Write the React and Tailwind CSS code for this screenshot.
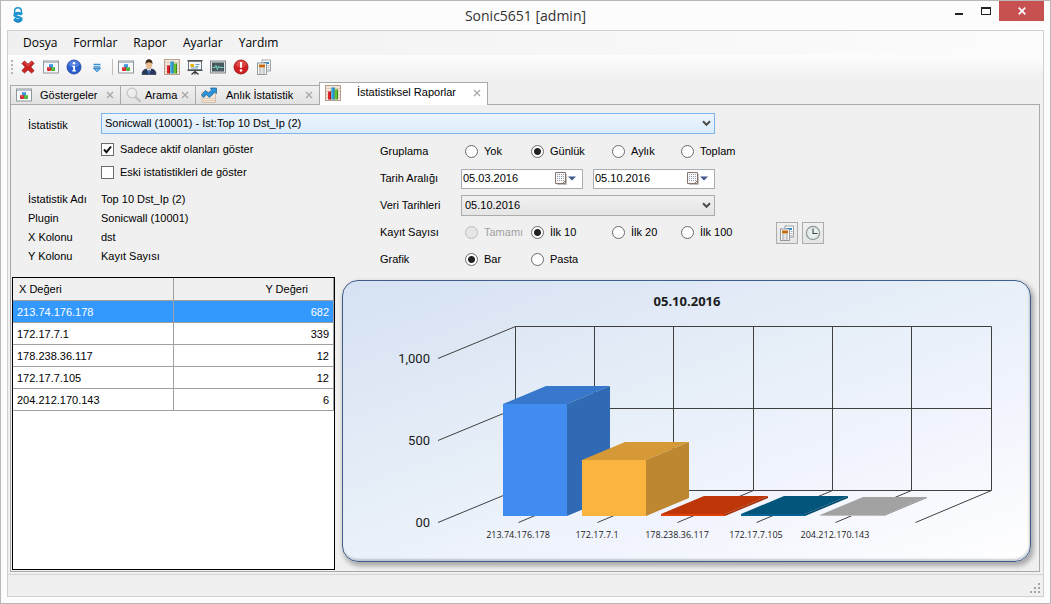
import React, { useState } from "react";

function Icon({ size = 16, children }) {
  return (
    <svg width={size} height={size} viewBox="0 0 16 16" aria-hidden="true" className="shrink-0">
      {children}
    </svg>
  );
}

const AppLogo = () => (
  <Icon>
    <path d="M4.6 6V4.2a3.4 3.4 0 0 1 6.8 0V6" fill="none" stroke="#1b94d2" strokeWidth="1.4" />
    <path
      d="M12 7.600C10.500 5.900 5 5.600 4.700 8c-.3 2.300 6.800 1.700 6.500 4-.2 1.900-4.800 1.700-7.200 0"
      fill="none"
      stroke="#1b94d2"
      strokeWidth="2.8"
    />
    <path d="M3.500 12.600c2.500 2.200 6.500 2.200 9 0-.8 2-2.500 3.200-4.500 3.200s-3.900-1.200-4.500-3.200z" fill="#1279b5" />
  </Icon>
);

const CrossIcon = () => (
  <Icon>
    <path
      d="M4.500 2 8 5.300 11.700 2 14 4.400 10.700 8 14 11.700 11.600 14 8 10.700 4.500 14 2 11.600 5.300 8 2 4.500z"
      fill="#cf2222"
      stroke="#8e1010"
      strokeWidth=".8"
    />
    <path d="M4.500 3.200 8 6.600l3.600-3.400" fill="none" stroke="#ee6a62" strokeWidth=".9" />
  </Icon>
);

const BlocksIcon = () => (
  <Icon>
    <rect x=".5" y="2" width="15" height="12" fill="#f7f8f9" stroke="#8f979d" />
    <path d="M1 3h14" stroke="#b9c0c6" strokeWidth="2" />
    <rect x="6" y="5" width="4" height="4" rx="1" fill="#2f8fe0" />
    <rect x="4" y="8" width="4" height="4" rx="1" fill="#d8262c" />
    <rect x="8" y="8" width="4" height="4" rx="1" fill="#45b035" />
    <path d="M7 6h2M5 9h2M9 9h2" stroke="#fff" strokeWidth=".8" opacity=".5" />
  </Icon>
);

const InfoIcon = () => (
  <Icon>
    <circle cx="8" cy="8" r="7" fill="#2b5fd0" stroke="#1b3f9c" strokeWidth=".8" />
    <ellipse cx="8" cy="5" rx="5.500" ry="3.500" fill="#6a95ec" opacity=".6" />
    <circle cx="8" cy="4.300" r="1.300" fill="#fff" />
    <path d="M6.300 6.800h2.700v4.500h1v1.200H6.200v-1.200h1V8h-.9z" fill="#fff" />
  </Icon>
);

const MoreIcon = () => (
  <Icon>
    <path d="M4.500 5.500h7M4.500 8h7" stroke="#3d8fd6" strokeWidth="1.400" />
    <path d="M4.500 9.500h7L8 12.800z" fill="#6db5ee" stroke="#2a78bf" strokeWidth=".8" />
  </Icon>
);

const UserIcon = () => (
  <Icon>
    <path d="M1 15.500c0-3.500 1.500-5 4.500-5.500h5c3 .5 4.500 2 4.500 5.500z" fill="#28395c" stroke="#16213a" strokeWidth=".6" />
    <path d="M5.800 9.700 8 15l2.200-5.300z" fill="#eef1f5" />
    <path d="M7.400 10.700h1.200l.5 3L8 15.300l-1.100-1.600z" fill="#3165b5" />
    <ellipse cx="8" cy="5.500" rx="3" ry="4.200" fill="#e9b98c" />
    <path d="M4.700 5.500C4 1.800 6 .3 8 .3s4 1.500 3.300 5.200C10.900 4 10 3.300 8 3.300S5.100 4 4.700 5.500z" fill="#3c2a1d" />
  </Icon>
);

const ChartIcon = () => (
  <Icon>
    <rect x=".5" y=".5" width="15" height="15" fill="#f1e4d8" stroke="#b9a08c" />
    <path d="M1 3.500h14M1 6.500h14M1 9.500h14M1 12.500h14" stroke="#d9c3b0" strokeWidth=".8" />
    <path d="M3 6.500h3v8H3z" fill="#e0262b" />
    <path d="M5.200 6.500H6v8h-.8z" fill="#8f1216" />
    <path d="M6.300 2.500h3.200v12H6.300z" fill="#31a4dc" />
    <path d="M8.700 2.500h.8v12h-.8z" fill="#16658f" />
    <path d="M9.800 4.500h3.200v10H9.800z" fill="#65c22f" />
    <path d="M12.200 4.500h.8v10h-.8z" fill="#387a14" />
  </Icon>
);

const BoardIcon = () => (
  <Icon>
    <path d="M8 11v2M8 12.500 4.500 15.500M8 12.500l3.500 3M8 12v3.500" stroke="#333" strokeWidth="1.200" />
    <rect x="1.500" y="2" width="13" height="9" fill="#f4f6f8" stroke="#6d767c" />
    <path d="M.5 1.800h15M.5 11.200h15" stroke="#4a5257" strokeWidth="1.400" />
    <rect x="3.500" y="5" width="3.500" height="3" fill="#e6b400" />
    <path d="M8.500 5.500h4M8.500 7.500h3M4 9h7" stroke="#6aa0c8" />
  </Icon>
);

const MonitorIcon = () => (
  <Icon>
    <rect x=".5" y="2" width="15" height="12" fill="#dfe2e4" stroke="#80878b" />
    <rect x="2" y="3.500" width="12" height="9" fill="#46565b" />
    <path d="M5 4v8M8 4v8M11 4v8M2 8h12" stroke="#62767c" strokeWidth=".5" />
    <path d="M2.500 8.500h2.500l1-2 1.300 4L8.500 7l1 1.500h4" fill="none" stroke="#6fe0c8" strokeWidth=".9" />
  </Icon>
);

const AlertIcon = () => (
  <Icon>
    <circle cx="8" cy="8" r="7" fill="#d21f22" stroke="#8e1113" strokeWidth=".8" />
    <ellipse cx="8" cy="5" rx="5.500" ry="3.500" fill="#ea6c64" opacity=".5" />
    <path d="M6.800 3h2.400l-.4 6H7.200z" fill="#fff" />
    <circle cx="8" cy="11.500" r="1.300" fill="#fff" />
  </Icon>
);

const NewsIcon = () => (
  <Icon>
    <rect x="6" y="1" width="8.500" height="11" fill="#fbfbfb" stroke="#8b9196" strokeWidth=".8" />
    <path d="M7.500 3h5.500v2H7.500z" fill="#2b8ed0" />
    <path d="M11.500 6.500h2M11.500 8.500h2M11.500 10.500h2" stroke="#9aa0a5" strokeWidth=".8" />
    <rect x="1.500" y="4" width="9" height="11.500" fill="#fbfbfb" stroke="#7c8287" strokeWidth=".8" />
    <path d="M3 5.500h6v3H3z" fill="#c46a10" />
    <path d="M3 10h2.500M6.500 10H9M3 12h2.500M6.500 12H9M3 14h2.500M6.500 14H9" stroke="#8b9196" strokeWidth=".9" />
  </Icon>
);

const SearchIcon = () => (
  <Icon>
    <path d="m9.500 10 4.500 4.200" stroke="#c3c3c3" strokeWidth="2.400" strokeLinecap="round" />
    <circle cx="6" cy="6" r="4.800" fill="#ececec" stroke="#c6c6c6" strokeWidth="1.300" />
    <path d="M3.500 5.500c.5-1.500 1.500-2 2.800-2.200" stroke="#fff" fill="none" />
  </Icon>
);

const TrendIcon = () => (
  <Icon>
    <rect x="1" y="5" width="13.500" height="10.500" fill="#f4e7da" stroke="#cdb49d" strokeWidth=".8" />
    <path d="M1.500 11.500h12.500M1.500 13.500h12.500" stroke="#e0cab6" />
    <path
      d="M.5 8 4.500 3.500l3 2.500 3-3L9.500 1H15.500v5.500L14 5.200 8.500 10.500 5.500 7.800 2.500 10.500z"
      fill="#2f93d8"
      stroke="#1a5f98"
      strokeWidth=".7"
    />
  </Icon>
);

const ClockIcon = () => (
  <Icon>
    <circle cx="8" cy="8" r="6.600" fill="#e9f1f0" stroke="#8c9698" strokeWidth="1.200" />
    <circle cx="8" cy="8" r="4.800" fill="none" stroke="#c2cecd" strokeDasharray="1 2.770" />
    <path d="M8 3.500v5h4.500" fill="none" stroke="#3d4547" strokeWidth="1.100" />
  </Icon>
);

const CalendarIcon = () => (
  <svg width="12" height="13" viewBox="0 0 12 13" aria-hidden="true">
    <path d="M.5.500h10v11H.5z" fill="#fbf9f8" stroke="#85756f" />
    <path d="M2 2.500h7M2 4.500h7M2 6.500h7M2 8.500h7" stroke="#8f9bb5" strokeDasharray="1 1" />
    <path d="M11.500 2v10.500H2" fill="none" stroke="#c7bfbc" />
    <path d="M7.500 11.500 10.500 8.500" stroke="#85756f" />
  </svg>
);

const menus = ["Dosya", "Formlar", "Rapor", "Ayarlar", "Yardım"];

const tools = [
  { label: "Kapat", icon: CrossIcon },
  { label: "Göstergeler", icon: BlocksIcon },
  { label: "Bilgi", icon: InfoIcon },
  { label: "Diğer", icon: MoreIcon },
  { label: "Panel", icon: BlocksIcon, separated: true },
  { label: "Kullanıcı", icon: UserIcon },
  { label: "Raporlar", icon: ChartIcon },
  { label: "Sunum", icon: BoardIcon },
  { label: "İzleme", icon: MonitorIcon },
  { label: "Uyarılar", icon: AlertIcon },
  { label: "Haberler", icon: NewsIcon },
];

const rows = [
  { x: "213.74.176.178", y: 682 },
  { x: "172.17.7.1", y: 339 },
  { x: "178.238.36.117", y: 12 },
  { x: "172.17.7.105", y: 12 },
  { x: "204.212.170.143", y: 6 },
];

const details = [
  ["İstatistik Adı", "Top 10 Dst_Ip (2)"],
  ["Plugin", "Sonicwall (10001)"],
  ["X Kolonu", "dst"],
  ["Y Kolonu", "Kayıt Sayısı"],
];

function TitleBar() {
  return (
    <header className="grid h-[29px] grid-cols-[1fr_auto_1fr] items-start">
      <div className="pt-[6px] pl-[9px]">
        <AppLogo />
      </div>
      <h1 className="pt-[5px] font-['Open_Sans',sans-serif] text-[14px] leading-5 text-[#333]">
        Sonic5651 [admin]
      </h1>
      <div className="mr-[6px] flex h-5 justify-end">
        <button aria-label="Küçült" className="flex w-[27px] justify-center pt-[12px]">
          <span className="h-[2px] w-2 bg-[#222]" />
        </button>
        <button aria-label="Büyüt" className="flex w-[27px] justify-center pt-[6px]">
          <span className="h-2 w-[10px] border border-t-2 border-[#222]" />
        </button>
        <button aria-label="Kapat" className="flex w-[45px] items-center justify-center bg-[#c75050]">
          <svg width="8" height="8" viewBox="0 0 8 8" aria-hidden="true">
            <path d="m.7.700 6.600 6.600M7.300.700.700 7.300" stroke="#fff" strokeWidth="1.700" />
          </svg>
        </button>
      </div>
    </header>
  );
}

function Tab({ label, icon: TabIcon, active, width, gap }) {
  return (
    <div
      className={`flex items-center border border-b-0 border-[#a9a9a9] pr-[2px] pl-[5px] ${width} ${
        active ? "h-[23px] bg-white pb-[3px]" : "-ml-px h-[19px] bg-gradient-to-b from-[#f0f0f0] to-[#e2e2e2] first:ml-0"
      }`}
    >
      <button role="tab" aria-selected={!!active} className={`flex flex-1 items-center whitespace-nowrap ${gap}`}>
        <TabIcon />
        <span className="text-[11px]">{label}</span>
      </button>
      <button aria-label={`${label} kapat`} className="w-4 text-[#a5a5a5]">
        <svg width="8" height="8" viewBox="0 0 8 8" className="mx-auto" aria-hidden="true">
          <path d="m1 1 6 6M7 1 1 7" stroke="currentColor" strokeWidth="1.200" />
        </svg>
      </button>
    </div>
  );
}

function Select({ id, value, className }) {
  return (
    <div className={`grid h-[21px] items-center border ${className}`}>
      <select id={id} defaultValue={value} className="col-start-1 row-start-1 h-[19px] w-full appearance-none pl-[3px] outline-none">
        <option>{value}</option>
      </select>
      <svg
        width="9"
        height="7"
        viewBox="0 0 9 7"
        className="pointer-events-none col-start-1 row-start-1 mr-[3px] justify-self-end"
        aria-hidden="true"
      >
        <path d="m1 1.200 3.500 3.600L8 1.200" fill="none" stroke="#4d4d4d" strokeWidth="2" />
      </svg>
    </div>
  );
}

function DateField({ label, value }) {
  return (
    <div className="flex h-5 w-[122px] items-center border border-[#abadb3] bg-white pr-[6px]">
      <input aria-label={label} defaultValue={value} className="w-0 flex-1 pl-px outline-none" />
      <button type="button" aria-label={`${label} seç`} className="flex items-center gap-px">
        <CalendarIcon />
        <svg width="8" height="5" viewBox="0 0 8 5" aria-hidden="true">
          <path d="M0 .500h8L4 4.500z" fill="#43598c" />
        </svg>
      </button>
    </div>
  );
}

function Radio({ name, label, checked, disabled }) {
  return (
    <label className={`flex items-center gap-[6px] whitespace-nowrap ${disabled ? "text-[#a0a0a0]" : ""}`}>
      <input
        type="radio"
        name={name}
        defaultChecked={checked}
        disabled={disabled}
        className="size-[13px] appearance-none rounded-full border border-[#6b6b6b] bg-white checked:bg-[radial-gradient(circle,#222_3px,#fff_4px)] disabled:border-[#bcbcbc] disabled:bg-[#e6e6e6]"
      />
      {label}
    </label>
  );
}

function Check({ label, checked }) {
  return (
    <label className="flex h-[23px] items-center gap-[6px]">
      <span className="grid">
        <input
          type="checkbox"
          defaultChecked={checked}
          className="peer col-start-1 row-start-1 size-[13px] appearance-none border border-[#6b6b6b] bg-white"
        />
        <svg
          width="13"
          height="13"
          viewBox="0 0 13 13"
          className="pointer-events-none invisible col-start-1 row-start-1 peer-checked:visible"
          aria-hidden="true"
        >
          <path d="m3 6.500 2.500 2.700L10 3.500" fill="none" stroke="#111" strokeWidth="2" />
        </svg>
      </span>
      {label}
    </label>
  );
}

function RadioRow({ name, options }) {
  return (
    <div className="grid grid-cols-[66px_81px_69px_auto] items-center pl-1">
      {options.map((option) => (
        <Radio key={option.label} name={name} {...option} />
      ))}
    </div>
  );
}

function Field({ label, htmlFor, children }) {
  return (
    <div className="flex h-[27px] items-center">
      <label htmlFor={htmlFor} className="w-[81px] shrink-0">
        {label}
      </label>
      {children}
    </div>
  );
}

function FilterForm() {
  return (
    <form className="pt-2 pl-[17px]">
      <div className="flex items-center">
        <label htmlFor="statistic" className="w-[73px] shrink-0 pt-1">
          İstatistik
        </label>
        <Select
          id="statistic"
          value="Sonicwall (10001) - İst:Top 10 Dst_Ip (2)"
          className="w-full max-w-[614px] border-[#7eb4ea] bg-gradient-to-b from-[#ecf4fc] to-[#dcecfc]"
        />
      </div>

      <div className="flex pt-1">
        <div className="w-[352px] shrink-0">
          <div className="pl-[73px]">
            <Check label="Sadece aktif olanları göster" checked />
            <Check label="Eski istatistikleri de göster" />
          </div>
          <dl className="grid grid-cols-[73px_1fr] pt-[6px] leading-[19px]">
            {details.map(([term, value]) => (
              <React.Fragment key={term}>
                <dt>{term}</dt>
                <dd>{value}</dd>
              </React.Fragment>
            ))}
          </dl>
        </div>

        <div>
          <Field label="Gruplama">
            <RadioRow
              name="grouping"
              options={[{ label: "Yok" }, { label: "Günlük", checked: true }, { label: "Aylık" }, { label: "Toplam" }]}
            />
          </Field>
          <Field label="Tarih Aralığı">
            <div className="flex gap-[10px]">
              <DateField label="Başlangıç tarihi" value="05.03.2016" />
              <DateField label="Bitiş tarihi" value="05.10.2016" />
            </div>
          </Field>
          <Field label="Veri Tarihleri" htmlFor="dates">
            <Select
              id="dates"
              value="05.10.2016"
              className="w-[254px] border-[#acacac] bg-gradient-to-b from-[#f0f0f0] to-[#e5e5e5]"
            />
          </Field>
          <Field label="Kayıt Sayısı">
            <div className="w-[315px]">
              <RadioRow
                name="limit"
                options={[
                  { label: "Tamamı", disabled: true },
                  { label: "İlk 10", checked: true },
                  { label: "İlk 20" },
                  { label: "İlk 100" },
                ]}
              />
            </div>
            <div className="flex gap-1">
              <button
                type="button"
                aria-label="Rapor oluştur"
                className="flex size-[22px] items-center justify-center border border-[#acacac] bg-gradient-to-b from-[#f0f0f0] to-[#e5e5e5]"
              >
                <NewsIcon />
              </button>
              <button
                type="button"
                aria-label="Zamanla"
                className="flex size-[22px] items-center justify-center border border-[#acacac] bg-gradient-to-b from-[#f0f0f0] to-[#e5e5e5]"
              >
                <ClockIcon />
              </button>
            </div>
          </Field>
          <Field label="Grafik">
            <RadioRow name="chart" options={[{ label: "Bar", checked: true }, { label: "Pasta" }]} />
          </Field>
        </div>
      </div>
    </form>
  );
}

function DataGrid() {
  const [selected, setSelected] = useState(0);

  return (
    <div className="w-[323px] shrink-0 border border-black bg-white">
      <table className="w-full table-fixed border-separate border-spacing-0">
        <thead>
          <tr className="h-[23px] bg-[#f0f0f0]">
            <th className="border-r border-b border-[#a0a0a0] pl-[6px] text-left font-normal">X Değeri</th>
            <th className="border-r border-b border-[#a0a0a0] pr-[25px] text-right font-normal">Y Değeri</th>
          </tr>
        </thead>
        <tbody>
          {rows.map((row, i) => (
            <tr
              key={row.x}
              onClick={() => setSelected(i)}
              className={`h-[22px] ${i === selected ? "bg-[#3399ff] text-white" : ""}`}
            >
              <td className="border-r border-b border-[#a0a0a0] pt-px pl-1">{row.x}</td>
              <td className="border-r border-b border-[#a0a0a0] pt-px pr-1 text-right">{row.y}</td>
            </tr>
          ))}
        </tbody>
      </table>
    </div>
  );
}

const gridX = [172.5, 251.5, 330.5, 410.5, 489.5, 568.5, 648.5];
const gridY = [
  { y: 45.5, label: "1,000" },
  { y: 127.5, label: "500" },
  { y: 209.5, label: "00" },
];

const bars = [
  { x: 160, top: 123, front: "#418cf0", roof: "#3777cc", side: "#3069b4", labelX: 175 },
  { x: 239, top: 179, front: "#fcb441", roof: "#d69937", side: "#bd8731", labelX: 254 },
  { x: 318, top: 233, front: "#e0400a", roof: "#be3608", side: "#a83008", labelX: 334 },
  { x: 398, top: 233, front: "#056492", roof: "#04557c", side: "#044b6e", labelX: 413 },
  { x: 477, top: 234, front: "#bfbfbf", roof: "#a2a2a2", side: "#8f8f8f", labelX: 492 },
];

function BarChart() {
  const base = 235;
  const width = 64;
  const dx = 43;
  const dy = 18;

  return (
    <div className="min-w-0 flex-1 rounded-[16px] border border-[#3f5e8c] bg-[linear-gradient(160deg,#d6e1f2_0%,#e7eff8_45%,#f1f4fd_68%,#ffffff_100%)] shadow-[2px_3px_5px_1px_rgba(0,0,0,0.3),inset_-1px_-2px_2px_rgba(80,90,110,0.3)]">
      <svg viewBox="0 0 687 280" className="block h-full w-full" role="img" aria-label="05.10.2016">
        <text x="344" y="25" textAnchor="middle" fill="#1a1a1a" className="font-['Open_Sans',sans-serif] text-[13px] font-bold">
          05.10.2016
        </text>

        <g stroke="#404040" fill="none">
          {gridX.map((x) => (
            <path key={x} d={`M${x} 45.500V209.500`} />
          ))}
          {gridX.slice(1).map((x) => (
            <path key={x} d={`M${x} 209.500l-76 32`} />
          ))}
          {gridY.map(({ y }) => (
            <path key={y} d={`M95 ${y + 32}l77.500 -32H648.500`} />
          ))}
        </g>

        {gridY.map(({ y, label }) => (
          <text
            key={label}
            x="87"
            y={y + 36}
            textAnchor="end"
            fill="#1a1a1a"
            className="font-[Roboto,sans-serif] text-[13px]"
          >
            {label}
          </text>
        ))}

        {bars.map((bar, i) => (
          <g key={bar.x}>
            <path d={`M${bar.x} ${bar.top}l${dx} ${-dy}h${width}l${-dx} ${dy}z`} fill={bar.roof} />
            <path
              d={`M${bar.x + width} ${bar.top}l${dx} ${-dy}V${base - dy}L${bar.x + width} ${base}z`}
              fill={bar.side}
            />
            <path d={`M${bar.x} ${bar.top}h${width}V${base}h${-width}z`} fill={bar.front} />
            <text
              x={bar.labelX}
              y="257"
              textAnchor="middle"
              fill="#1a1a1a"
              className="font-['Open_Sans',sans-serif] text-[9px]"
            >
              {rows[i].x}
            </text>
          </g>
        ))}
      </svg>
    </div>
  );
}

function StatusBar() {
  return (
    <footer className="mt-[2px] flex h-[22px] items-end justify-end border-t border-[#d4d4d4] p-[3px]">
      <svg width="10" height="10" viewBox="0 0 10 10" fill="#a5a5a5" aria-hidden="true">
        <path d="M8 0h2v2H8zM4 4h2v2H4zM8 4h2v2H8zM0 8h2v2H0zM4 8h2v2H4zM8 8h2v2H8z" />
      </svg>
    </footer>
  );
}

export default function App() {
  return (
    <div className="flex min-h-screen flex-col border border-[#b9b9b9] bg-[#fcfcfc] font-['Liberation_Sans',Arial,sans-serif] text-[11px] text-black">
      <TitleBar />
      <div className="mx-[6px] mb-[6px] flex flex-1 flex-col border border-[#d0d0d0] bg-[#f0f0f0]">
        <nav className="flex h-6 items-center gap-4 bg-gradient-to-r from-[#f0f0f0] to-[#fcfcfc] pl-[15px] font-['Open_Sans',sans-serif] text-[12px]">
          {menus.map((menu) => (
            <button key={menu}>{menu}</button>
          ))}
        </nav>

        <div className="flex h-[25px] items-center gap-[7px] bg-gradient-to-b from-[#fdfdfd] to-[#f0f0f0] pb-px pl-[3px]">
          <span className="h-[14px] border-l-2 border-dotted border-[#b5b5b5]" />
          {tools.map(({ label, icon: ToolIcon, separated }) => (
            <button key={label} aria-label={label} className={separated ? "border-l border-[#bdbdbd] pl-[5px]" : ""}>
              <ToolIcon />
            </button>
          ))}
        </div>

        <div role="tablist" className="mt-[2px] ml-[2px] flex h-[22px] items-end">
          <Tab label="Göstergeler" icon={BlocksIcon} width="w-[111px]" gap="gap-2" />
          <Tab label="Arama" icon={SearchIcon} width="w-[76px]" gap="gap-[3px]" />
          <Tab label="Anlık İstatistik" icon={TrendIcon} width="w-[125px]" gap="gap-[9px]" />
          <div className="z-10 -mb-px -ml-px">
            <Tab label="İstatistiksel Raporlar" icon={ChartIcon} width="w-[169px]" gap="gap-4" active />
          </div>
        </div>

        <main className="mr-[3px] ml-[2px] flex flex-1 flex-col border border-[#a9a9a9]">
          <FilterForm />
          <div className="flex flex-1 gap-[7px] pt-[4px] pr-2 pb-px pl-px">
            <DataGrid />
            <div className="flex min-w-0 flex-1 pt-[3px] pb-2">
              <BarChart />
            </div>
          </div>
        </main>

        <StatusBar />
      </div>
    </div>
  );
}
